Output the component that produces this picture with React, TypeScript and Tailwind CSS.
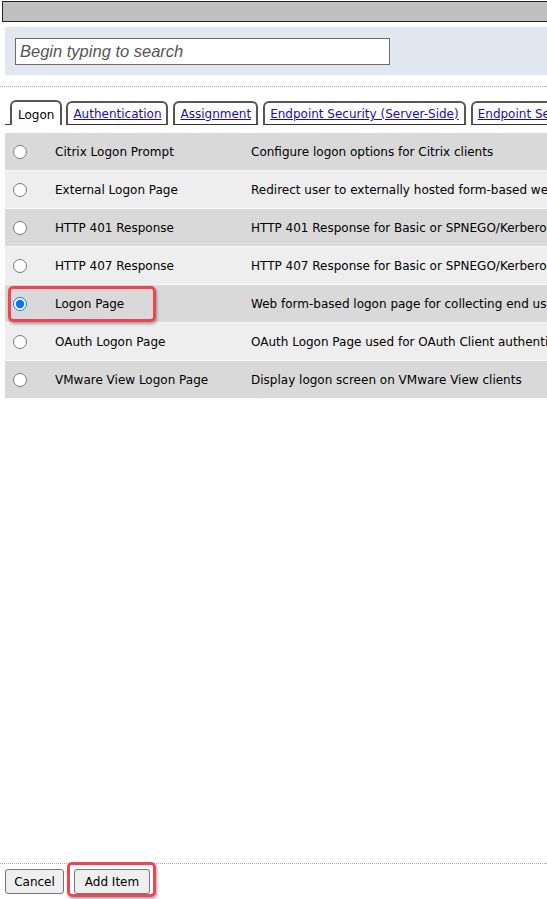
import React from 'react'

type Row = {
    name: string
    description: string
    selected?: boolean
}

const rows: Row[] = [
    { name: 'Citrix Logon Prompt', description: 'Configure logon options for Citrix clients' },
    { name: 'External Logon Page', description: 'Redirect user to externally hosted form-based web logon page' },
    { name: 'HTTP 401 Response', description: 'HTTP 401 Response for Basic or SPNEGO/Kerberos authentication' },
    { name: 'HTTP 407 Response', description: 'HTTP 407 Response for Basic or SPNEGO/Kerberos authentication' },
    { name: 'Logon Page', description: 'Web form-based logon page for collecting end user credentials', selected: true },
    { name: 'OAuth Logon Page', description: 'OAuth Logon Page used for OAuth Client authentication' },
    { name: 'VMware View Logon Page', description: 'Display logon screen on VMware View clients' },
]

const tabs = ['Logon', 'Authentication', 'Assignment', 'Endpoint Security (Server-Side)', 'Endpoint Security (Client-Side)']

const font = { fontFamily: 'Tahoma, "DejaVu Sans", Verdana, sans-serif' }

export default function App() {
    return (
        <div className="relative flex h-[899px] w-[547px] flex-col overflow-hidden bg-white text-[12px] text-black" style={font}>
            {/* title bar */}
            <div className="ml-[2px] mt-[1px] h-[21px] w-[600px] shrink-0 border border-[#222] bg-[#c0c0c0]" />

            {/* search */}
            <div className="ml-[5px] mt-[5px] flex h-[48px] shrink-0 items-center bg-[#e1e8ef] pl-[10px]">
                <input
                    readOnly
                    placeholder="Begin typing to search"
                    className="h-[27px] w-[375px] border border-[#6b6b6b] bg-white px-[4px] pt-[1px] text-[16.5px] italic placeholder:text-[#555]"
                    style={{ fontFamily: '"Liberation Sans", Arial, sans-serif' }}
                />
            </div>

            <div className="mt-[11px] h-0 shrink-0 border-t border-dotted border-[#aaa]" />

            {/* tabs */}
            <div className="mt-[13px] flex h-[25px] shrink-0 items-end overflow-hidden whitespace-nowrap pl-[5px]">
                <div className="h-[24px] w-[5px] shrink-0 border-b border-[#333]" />
                {tabs.map((t, i) =>
                    i === 0 ? (
                        <div
                            key={t}
                            className="mr-[4px] flex h-[25px] shrink-0 items-center rounded-t-[6px] border-2 border-b-0 border-[#555] bg-white px-[6px] pt-[2px] text-[12px]"
                        >
                            {t}
                        </div>
                    ) : (
                        <div
                            key={t}
                            className="mr-[5px] flex h-[24px] shrink-0 items-center rounded-t-[6px] border-2 border-b border-[#555] border-b-[#333] bg-white px-[5px] pt-[1px] text-[12px] text-[#1a0dab] underline"
                        >
                            {t}
                        </div>
                    )
                )}
            </div>

            {/* list */}
            <div className="ml-[5px] mt-[8px] flex shrink-0 flex-col overflow-hidden text-[12px]">
                {rows.map((r, i) => (
                    <div
                        key={r.name}
                        className={`flex h-[38px] items-center whitespace-nowrap border-b border-[#f8f8f8] pt-[1px] ${i % 2 === 0 ? 'bg-[#d9d9d9]' : 'bg-[#eeeeee]'}`}
                    >
                        <div className="flex w-[50px] shrink-0 items-center pl-[8px]">
                            <input type="radio" name="item" defaultChecked={r.selected} className="m-0 h-[14px] w-[14px] accent-[#0075ff]" />
                        </div>
                        <div className="w-[196px] shrink-0">{r.name}</div>
                        <div className="shrink-0">{r.description}</div>
                    </div>
                ))}
            </div>

            <div className="flex-1" />

            {/* footer */}
            <div className="h-0 shrink-0 border-t border-dotted border-[#aaa]" />
            <div className="flex h-[35px] shrink-0 items-start gap-[10px] pl-[5px] pt-[5px] text-[12px]">
                <button className="h-[25px] w-[59px] rounded-[3px] border border-[#767676] bg-[#efefef]">Cancel</button>
                <button className="h-[25px] w-[76px] rounded-[3px] border border-[#767676] bg-[#efefef]">Add Item</button>
            </div>

            {/* highlight callouts */}
            <div className="pointer-events-none absolute left-[8px] top-[286px] h-[36px] w-[148px] rounded-[5px] border-[3px] border-[#ef4452] shadow-[1px_2px_3px_rgba(0,0,0,0.35)]" />
            <div className="pointer-events-none absolute left-[67px] top-[862px] h-[35px] w-[89px] rounded-[5px] border-[3px] border-[#ef4452] shadow-[1px_2px_3px_rgba(0,0,0,0.35)]" />
        </div>
    )
}
